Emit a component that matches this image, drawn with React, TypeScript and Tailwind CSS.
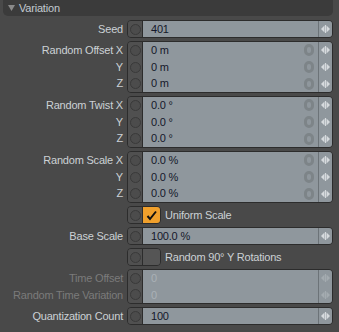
const font = { fontFamily: '"Liberation Sans", Arial, sans-serif' }

function Circle() {
  return <div className="w-[11px] h-[11px] rounded-full border border-[#3a3a3a] bg-[#4c4c4c]" />
}

function Arrows({ dim }: { dim?: boolean }) {
  return (
    <svg width="9" height="8" viewBox="0 0 9 8" className={dim ? 'opacity-30' : ''}>
      <path d="M3.5 0.5 L0 4 L3.5 7.5 Z" fill="#d6dadd" />
      <rect x="4" y="0" width="1" height="8" fill="#d6dadd" />
      <path d="M5.5 0.5 L9 4 L5.5 7.5 Z" fill="#d6dadd" />
    </svg>
  )
}

function Reset() {
  return <div className="w-[10px] h-[12px] rounded-full border-[3px] border-[#7d8488] mr-[4px]" />
}

function Row({ label, value, dim }: { label: string; value: string; dim?: boolean }) {
  return (
    <div className="flex h-[18px] items-stretch">
      <div className={`w-[123px] text-right leading-[18px] ${dim ? 'text-[#7b7b7b]' : 'text-[#ccd1d5]'}`}>
        {label}
      </div>
      <div className="ml-[4px] w-[206px] flex rounded-[4px] border border-[#2c2c2c] overflow-hidden">
        <div className="w-[15px] bg-[#505050] border-r border-[#2c2c2c] flex items-center justify-center">
          <Circle />
        </div>
        <div className="flex-1 bg-[#8f979d] pl-[8px] leading-[16px] text-[#15182a]">{value}</div>
        <div className="w-[14px] bg-[#8f979d] border-l border-[#6c7378] flex items-center justify-center">
          <Arrows dim={dim} />
        </div>
      </div>
    </div>
  )
}

function Group({
  labels,
  values,
  reset,
  dim,
  h,
}: {
  labels: string[]
  values: string[]
  reset?: boolean
  dim?: boolean
  h: string
}) {
  return (
    <div className={`flex ${h}`}>
      <div className="w-[123px] flex flex-col py-[1px]">
        {labels.map((l, i) => (
          <div
            key={i}
            className={`flex-1 flex items-center justify-end whitespace-nowrap ${dim ? 'text-[#7b7b7b]' : 'text-[#ccd1d5]'}`}
          >
            {l}
          </div>
        ))}
      </div>
      <div className="ml-[4px] w-[206px] flex rounded-[4px] border border-[#2c2c2c] overflow-hidden">
        <div className="w-[15px] bg-[#505050] border-r border-[#2c2c2c] flex flex-col">
          {values.map((_, i) => (
            <div key={i} className="flex-1 flex items-center justify-center">
              <Circle />
            </div>
          ))}
        </div>
        <div className="flex-1 bg-[#8f979d] flex flex-col">
          {values.map((v, i) => (
            <div key={i} className="flex-1 flex items-center pl-[8px]">
              <span className={`flex-1 ${dim ? 'text-[#aab1b6]' : 'text-[#15182a]'}`}>{v}</span>
              {reset && <Reset />}
            </div>
          ))}
        </div>
        <div className="w-[14px] bg-[#8f979d] border-l border-[#6c7378] flex flex-col">
          {values.map((_, i) => (
            <div key={i} className="flex-1 flex items-center justify-center">
              <Arrows dim={dim} />
            </div>
          ))}
        </div>
      </div>
    </div>
  )
}

function Toggle({ label, checked }: { label: string; checked?: boolean }) {
  return (
    <div className="flex h-[18px] items-stretch">
      <div className="w-[123px]" />
      <div className="ml-[4px] w-[34px] flex rounded-[4px] border border-[#2c2c2c] overflow-hidden">
        <div className="w-[15px] bg-[#505050] border-r border-[#2c2c2c] flex items-center justify-center">
          <Circle />
        </div>
        {checked ? (
          <div className="flex-1 bg-[#f0a02c] flex items-center justify-center">
            <svg width="11" height="11" viewBox="0 0 11 11">
              <path d="M1.5 6 L4 9 L10 1.5" stroke="#111" strokeWidth="2" fill="none" />
            </svg>
          </div>
        ) : (
          <div className="flex-1 bg-[#555555]" />
        )}
      </div>
      <div className="pl-[4px] leading-[18px] text-[#ccd1d5]">{label}</div>
    </div>
  )
}

export default function App() {
  return (
    <div
      className="w-[339px] h-[332px] bg-[#494949] text-[11px] tracking-[-0.2px] overflow-hidden"
      style={font}
    >
      <div className="mx-[3px] w-[330px] h-[16px] bg-[#3b3b3b] rounded-b-[5px] flex items-center">
        <svg width="7" height="6" viewBox="0 0 7 6" className="ml-[5px]">
          <path d="M0 0 L7 0 L3.5 6 Z" fill="#8a8a8a" />
        </svg>
        <span className="ml-[4px] text-[#c3cad1]">Variation</span>
      </div>
      <div className="flex flex-col gap-[3px] mt-[4px]">
        <Row label="Seed" value="401" />
        <Group h="h-[52px]" labels={['Random Offset X', 'Y', 'Z']} values={['0 m', '0 m', '0 m']} reset />
        <Group h="h-[52px]" labels={['Random Twist X', 'Y', 'Z']} values={['0.0 °', '0.0 °', '0.0 °']} reset />
        <Group h="h-[52px]" labels={['Random Scale X', 'Y', 'Z']} values={['0.0 %', '0.0 %', '0.0 %']} reset />
        <Toggle label="Uniform Scale" checked />
        <Row label="Base Scale" value="100.0 %" />
        <Toggle label="Random 90° Y Rotations" />
        <Group h="h-[35px]" labels={['Time Offset', 'Random Time Variation']} values={['0', '0']} dim />
        <Row label="Quantization Count" value="100" />
      </div>
    </div>
  )
}
